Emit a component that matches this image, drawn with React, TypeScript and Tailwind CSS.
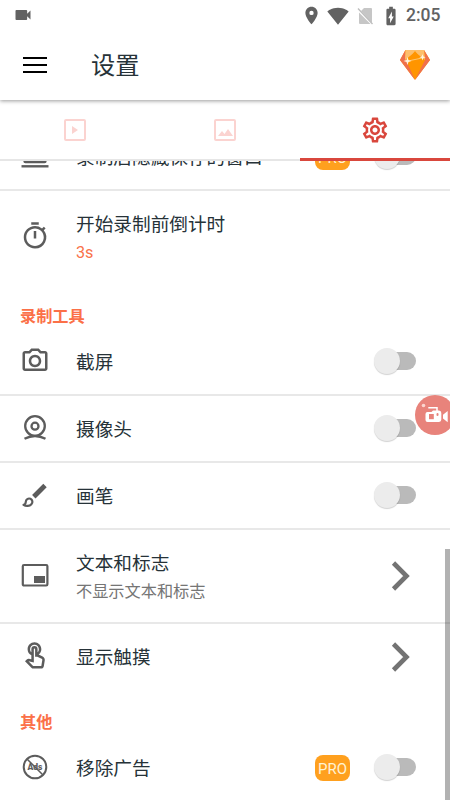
import { useState } from 'react';
import type { ReactNode } from 'react';
import {
  MdBatteryChargingFull,
  MdLocationOn,
  MdOutlineCameraAlt,
  MdOutlineTimer,
  MdOutlineTouchApp,
  MdSignalWifi4Bar,
  MdVideocam,
} from 'react-icons/md';

function Diamond() {
  return (
    <svg width="32" height="32" viewBox="0 0 32 32">
      <path d="M6.5 1H25l6 10-15 20L1 11z" fill="#ff9500" />
      <path d="M6.5 1 1 11l15 20L7 11z" fill="#ef704c" />
      <path d="M25 1l6 10-15 20 10-20z" fill="#ef704c" />
      <path d="M6.5 1H25l1 10-10-8L6 11z" fill="#fdbf6b" />
      <path d="M16 2l7 9H9z" fill="#ff9500" />
      <path d="M9 12l14-3" stroke="#ffc56f" strokeWidth="1" />
      <path d="M8.5 8l1 3 3 1-3 1-1 3-1-3-3-1 3-1zM23.500 5l.8 2.400 2.400.8-2.400.8-.8 2.400-.8-2.400-2.400-.8 2.400-.8z" fill="#fff3df" />
    </svg>
  );
}

function StatusBar() {
  return (
    <div className="flex h-8 items-center pr-[10px] pl-[13px] text-[#626262]">
      <MdVideocam size={20} className="-mt-[2px]" />
      <div className="-mt-px ml-auto flex items-center">
        <MdLocationOn size={21} />
        <MdSignalWifi4Bar size={22} className="ml-[5px]" />
        <svg width="17" height="20" viewBox="0 0 17 20" className="ml-[8px]">
          <path d="M7 2h7a1 1 0 0 1 1 1v14L4 5zM2 6.500 13.500 18H3a1 1 0 0 1-1-1z" fill="#c6c6c6" />
          <path d="M1 2.500 15.500 18" stroke="#bdbdbd" strokeWidth="1.300" />
        </svg>
        <MdBatteryChargingFull size={22} className="ml-[6px]" />
        <span className="ml-[4px] w-[34px] text-[17.5px] font-medium whitespace-nowrap">2:05</span>
      </div>
    </div>
  );
}

function Tabs() {
  return (
    <div className="relative z-10 flex h-[61px] shrink-0 border-b-2 border-[#e6e6e6] bg-white">
      <div className="flex flex-1 items-center justify-center text-[#fbd3d0]">
        <svg width="24" height="24" viewBox="0 0 24 24" fill="none" stroke="currentColor" strokeWidth="2">
          <rect x="2" y="2" width="20" height="20" rx="1" />
          <path d="M9 8v8l6-4z" fill="currentColor" stroke="none" />
        </svg>
      </div>
      <div className="flex flex-1 items-center justify-center text-[#fbd3d0]">
        <svg width="24" height="24" viewBox="0 0 24 24" fill="none" stroke="currentColor" strokeWidth="2">
          <rect x="2" y="2" width="20" height="20" rx="1" />
          <path d="M5 18l4-5 2.500 3 3.500-5 5 7z" fill="currentColor" stroke="none" />
        </svg>
      </div>
      <div className="-mb-[2px] flex flex-1 items-center justify-center border-b-3 border-[#d9473d] pt-[2px] text-[#d9473d]">
        <svg width="30" height="30" viewBox="0 0 24 24" fill="currentColor">
          <path d="M19.430 12.980c.040-.320.070-.640.070-.980s-.030-.660-.070-.980l2.110-1.650c.190-.150.240-.420.120-.640l-2-3.460c-.120-.220-.390-.300-.610-.220l-2.490 1c-.520-.400-1.080-.730-1.690-.980l-.380-2.650A.488.488 0 0 0 14 2h-4c-.250 0-.460.180-.490.420l-.380 2.650c-.610.250-1.170.590-1.690.980l-2.490-1c-.230-.090-.490 0-.610.220l-2 3.460c-.130.220-.070.490.120.640l2.110 1.650c-.040.320-.070.650-.070.980s.030.660.070.980l-2.110 1.650c-.190.150-.240.420-.120.640l2 3.460c.120.220.390.300.610.220l2.490-1c.520.400 1.080.730 1.690.980l.380 2.650c.030.240.240.420.490.420h4c.250 0 .460-.180.490-.420l.380-2.650c.610-.250 1.170-.590 1.690-.980l2.490 1c.230.090.490 0 .610-.220l2-3.460c.120-.220.070-.490-.120-.640zm-1.980-1.710c.040.310.050.520.050.730s-.020.430-.050.730l-.140 1.130.890.700 1.080.840-.700 1.210-1.270-.510-1.040-.420-.900.680c-.430.320-.840.560-1.250.730l-1.060.430-.160 1.130-.200 1.350h-1.400l-.350-2.480-1.060-.430c-.430-.180-.830-.410-1.230-.710l-.910-.700-1.060.430-1.270.510-.700-1.210 1.970-1.540-.140-1.130c-.030-.310-.050-.540-.050-.740s.020-.430.050-.730l.140-1.130-1.970-1.540.700-1.210 1.270.510 1.040.420.900-.680c.430-.320.840-.560 1.250-.730l1.060-.430.160-1.130.200-1.350h1.390l.350 2.480 1.060.430c.430.180.830.410 1.230.710l.910.700 1.060-.430 1.270-.510.700 1.210-1.960 1.550zM12 8c-2.210 0-4 1.790-4 4s1.790 4 4 4 4-1.790 4-4-1.790-4-4-4m0 6c-1.100 0-2-.900-2-2s.900-2 2-2 2 .900 2 2-.900 2-2 2" />
        </svg>
      </div>
    </div>
  );
}

function Laptop() {
  return (
    <svg width="30" height="30" viewBox="0 0 30 30" fill="none" stroke="currentColor" strokeWidth="2.400">
      <rect x="4.500" y="7" width="21" height="14" rx="1" />
      <path d="M1.500 25.300h27" />
    </svg>
  );
}

function Webcam() {
  return (
    <svg width="30" height="30" viewBox="0 0 30 30" fill="none" stroke="currentColor" strokeWidth="2.300">
      <circle cx="15" cy="13" r="9.800" />
      <circle cx="15" cy="13.200" r="3.500" />
      <path d="M4.500 25.800c7-3.700 14-3.700 21 0" />
    </svg>
  );
}

function Brush() {
  return (
    <svg width="30" height="30" viewBox="0 0 30 30" fill="none" stroke="currentColor">
      <path d="M25 5.500 13.800 16.800" strokeWidth="4.800" />
      <path d="M3.500 24.800c2-.2 2.200-1.500 2.300-3a3.300 3.300 0 1 1 5.600 2.400c-1.800 2-5.400 2.300-7.900.6z" strokeWidth="2.200" strokeLinejoin="round" />
    </svg>
  );
}

function PictureInPicture() {
  return (
    <svg width="30" height="30" viewBox="0 0 30 30">
      <rect x="2.800" y="5" width="24.600" height="20.500" rx="1.200" fill="none" stroke="currentColor" strokeWidth="2.200" />
      <rect x="14" y="16" width="11" height="7" fill="currentColor" />
    </svg>
  );
}

function NoAds() {
  return (
    <svg width="30" height="30" viewBox="0 0 30 30" fill="none" stroke="currentColor">
      <circle cx="15" cy="15" r="11.300" strokeWidth="2" />
      <text x="15" y="18.300" textAnchor="middle" fontSize="8.500" fontWeight="900" fill="currentColor" stroke="none">
        Ads
      </text>
      <path d="M7 7l16 16" strokeWidth="1.500" />
    </svg>
  );
}

function Toggle() {
  const [on, setOn] = useState(false);
  return (
    <button
      role="switch"
      aria-checked={on}
      onClick={() => setOn(!on)}
      className="mb-px flex h-[27px] w-[42px] items-center"
    >
      <span className="ml-[6px] flex h-[18px] w-[36px] items-center rounded-full bg-[#bababa]">
        <span
          className={`h-[26px] w-[26px] shrink-0 rounded-full bg-[#ececec] shadow-[0_1px_1px_rgba(0,0,0,0.18)] ${on ? 'ml-[10px]' : '-ml-[6px]'}`}
        />
      </span>
    </button>
  );
}

function Chevron() {
  return (
    <svg width="20" height="30" viewBox="0 0 20 30" className="mr-[5px]">
      <path d="M2.500 2 15.500 15l-13 13" fill="none" stroke="#737373" strokeWidth="4.600" />
    </svg>
  );
}

type RowProps = {
  icon: ReactNode;
  title: string;
  sub?: string;
  accent?: boolean;
  pro?: boolean;
  nav?: boolean;
  control?: boolean;
  divider?: boolean;
};

function Row({ icon, title, sub, accent, pro, nav, control = true, divider = true }: RowProps) {
  return (
    <div
      className={`flex shrink-0 items-center border-b-2 pr-[34px] pl-5 ${sub ? 'h-[94px]' : 'h-[67px]'} ${divider ? 'border-[#e8e8e8]' : 'border-transparent'}`}
    >
      <span className="mb-[2px] flex w-14 text-[#5c5c5c]">{icon}</span>
      <div className="flex-1 pt-[2px]">
        <div className="text-[18.67px] leading-7 text-[#263238]">{title}</div>
        {sub && (
          <div className={`-mb-px text-[16.2px] leading-[28px] ${accent ? 'text-[#f9724a]' : 'text-[#757575]'}`}>{sub}</div>
        )}
      </div>
      {pro && (
        <span className="mr-6 flex h-[26px] w-[35px] items-center justify-center rounded-lg bg-[#ffa01e] pt-[3px] text-[15px] text-[#fff3d4]">
          PRO
        </span>
      )}
      {nav ? <Chevron /> : control && <Toggle />}
    </div>
  );
}

function SectionTitle({ children }: { children: ReactNode }) {
  return (
    <h2 className="flex h-11 shrink-0 items-end pb-px pl-5 text-[16.2px] leading-[22px] font-bold text-[#fb7048]">
      {children}
    </h2>
  );
}

function RecordBubble() {
  return (
    <button className="absolute top-[395px] left-[415px] z-20 h-10 w-10 rounded-full bg-[#e8837b]">
      <svg width="40" height="40" viewBox="0 0 40 40" fill="none">
        <circle cx="8.500" cy="10.500" r="1.800" fill="#fbd5cf" />
        <path d="M13.300 12.700h8.700V16" stroke="#fff" strokeWidth="1.500" />
        <path d="M12.500 17h4l1.500-1.500h6A2.500 2.500 0 0 1 26.300 18v6.500A2.500 2.500 0 0 1 24 27H12.500a2 2 0 0 1-2-2v-6a2 2 0 0 1 2-2z" fill="#fff" />
        <rect x="14" y="19" width="4.800" height="5.200" fill="#e8837b" />
        <rect x="21.500" y="18" width="2" height="3" rx="1" fill="#e8837b" />
        <path d="M32.700 16v11.300l-4.700-3.800v-3.700z" fill="#fff" />
      </svg>
    </button>
  );
}

export default function App() {
  return (
    <div className="relative flex h-[800px] w-[450px] flex-col overflow-hidden bg-white font-[Roboto,'Noto_Sans_CJK_SC',sans-serif]">
      <header className="relative z-20 h-[100px] shrink-0 bg-white shadow-[0_1px_4px_rgba(0,0,0,0.4)]">
        <StatusBar />
        <div className="flex h-[66px] items-center pr-[19px] pl-[23px]">
          <button className="flex w-[68px] flex-col gap-[5px]">
            <span className="h-[2px] w-6 bg-black" />
            <span className="h-[2px] w-6 bg-black" />
            <span className="h-[2px] w-6 bg-black" />
          </button>
          <h1 className="flex-1 pt-[3px] text-[24.3px] text-[#263238]">设置</h1>
          <Diamond />
        </div>
      </header>

      <Tabs />

      <main className="relative flex min-h-0 flex-1 flex-col overflow-hidden">
        <div className="-mt-[37px] flex shrink-0 flex-col">
          <Row icon={<Laptop />} title="录制后隐藏保存的窗口" pro />
          <Row icon={<MdOutlineTimer size={30} />} title="开始录制前倒计时" sub="3s" accent control={false} divider={false} />
          <SectionTitle>录制工具</SectionTitle>
          <Row icon={<MdOutlineCameraAlt size={30} />} title="截屏" />
          <Row icon={<Webcam />} title="摄像头" />
          <Row icon={<Brush />} title="画笔" />
          <Row icon={<PictureInPicture />} title="文本和标志" sub="不显示文本和标志" nav />
          <Row icon={<MdOutlineTouchApp size={30} />} title="显示触摸" nav divider={false} />
          <SectionTitle>其他</SectionTitle>
          <Row icon={<NoAds />} title="移除广告" pro divider={false} />
        </div>
        {/* scrollbar */}
        <div className="absolute right-0 bottom-0 h-[251px] w-[5px] bg-black/30" />
      </main>

      <RecordBubble />
    </div>
  );
}
